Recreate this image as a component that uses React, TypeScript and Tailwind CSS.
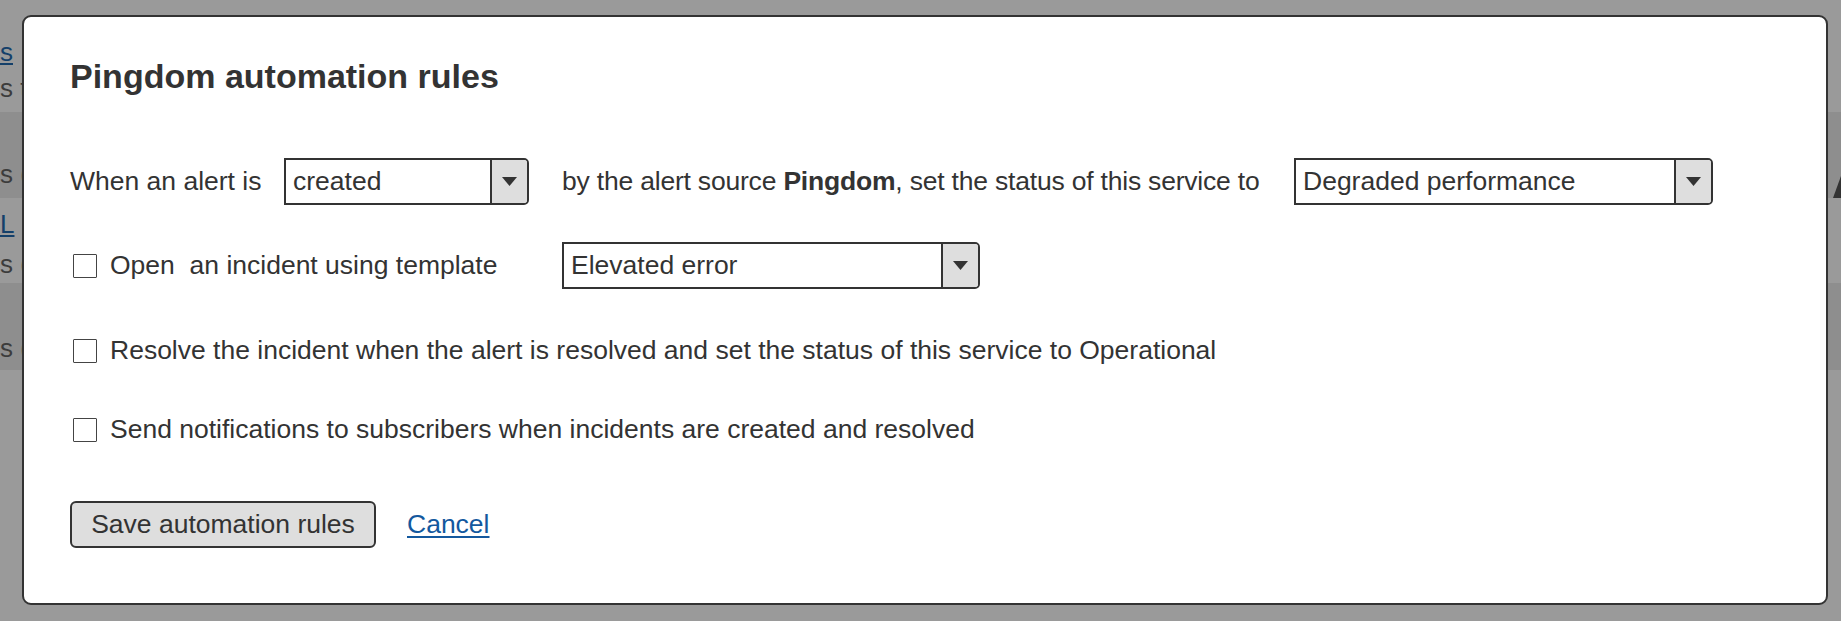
import React from "react";

const FONT = { fontFamily: '"Liberation Sans", Arial, sans-serif' };

function Select({ value, width }: { value: string; width: string }) {
  return (
    <div className={`flex h-[47px] ${width} border-2 border-[#333] rounded-r-[5px] bg-white`}>
      <div className="flex-1 flex items-center pl-[7px] text-[26.5px] text-[#333] leading-none whitespace-nowrap overflow-hidden">{value}</div>
      <div className="w-[37px] flex items-center justify-center bg-[#dedede] border-l-2 border-[#333] rounded-r-[3px]">
        <svg width="17" height="11" viewBox="0 0 17 11">
          <polygon points="1,1 16,1 8.5,10" fill="#333" />
        </svg>
      </div>
    </div>
  );
}

function Checkbox() {
  return <div className="w-[24px] h-[24px] border-[1.5px] border-[#444] rounded-[1px] bg-white shrink-0" />;
}

export default function App() {
  return (
    <div className="relative w-[1841px] h-[621px] bg-[#9a9a9a] overflow-hidden" style={FONT}>
      {/* background page behind overlay */}
      <div className="flex flex-col w-full">
        <div className="h-[112px] bg-[#9a9a9a] relative">
          <div className="pt-[38px] text-[26px] leading-[28px] text-[#14406a] underline">s</div>
          <div className="mt-[8px] text-[26px] leading-[28px] text-[#3c3c3c] whitespace-pre">s t</div>
        </div>
        <div className="h-[86px] bg-[#8e8e8e] flex flex-col justify-end pb-[10px]">
          <div className="text-[26px] leading-[28px] text-[#3c3c3c] whitespace-pre">s (</div>
        </div>
        <div className="h-[85px] bg-[#9a9a9a] flex flex-col pt-[12px]">
          <div className="text-[26px] leading-[28px] text-[#14406a] underline">L</div>
          <div className="text-[26px] leading-[28px] text-[#3c3c3c] mt-[12px] whitespace-pre">s (</div>
        </div>
        <div className="h-[87px] bg-[#8e8e8e] flex flex-col justify-end pb-[8px]">
          <div className="text-[26px] leading-[28px] text-[#3c3c3c] whitespace-pre">s (</div>
        </div>
        <div className="flex-1 bg-[#9a9a9a]" />
      </div>
      <div className="absolute right-0 top-[176px]">
        <svg width="8" height="24" viewBox="0 0 8 24">
          <polygon points="8,0 8,22 0,22" fill="#333" />
        </svg>
      </div>

      {/* dialog */}
      <div className="absolute left-[22px] top-[15px] w-[1806px] h-[590px] bg-white border-2 border-[#333] rounded-[9px] pl-[46px] pt-[39px] text-[#333]">
        <h1 className="text-[34px] leading-[40px] font-bold">Pingdom automation rules</h1>

        <div className="mt-[62px] flex items-center h-[47px] text-[26.5px]">
          <div className="w-[214px] whitespace-nowrap">When an alert is</div>
          <Select value="created" width="w-[245px]" />
          <div className="w-[765px] pl-[33px] whitespace-nowrap tracking-[-0.2px]">
            by the alert source <span className="font-bold">Pingdom</span>, set the status of this service to
          </div>
          <Select value="Degraded performance" width="w-[419px]" />
        </div>

        <div className="mt-[37px] flex items-center h-[47px] text-[26.5px]">
          <div className="w-[492px] flex items-center pl-[3px]">
            <Checkbox />
            <span className="ml-[13px] whitespace-pre">Open  an incident using template</span>
          </div>
          <Select value="Elevated error" width="w-[418px]" />
        </div>

        <div className="mt-[38px] flex items-center h-[47px] text-[26.5px] pl-[3px]">
          <Checkbox />
          <span className="ml-[13px] whitespace-nowrap">Resolve the incident when the alert is resolved and set the status of this service to Operational</span>
        </div>

        <div className="mt-[32px] flex items-center h-[47px] text-[26.5px] pl-[3px]">
          <Checkbox />
          <span className="ml-[13px] whitespace-nowrap">Send notifications to subscribers when incidents are created and resolved</span>
        </div>

        <div className="mt-[48px] flex items-center h-[47px]">
          <button className="h-[47px] w-[306px] bg-[#dedede] border-2 border-[#333] rounded-[6px] text-[26.5px] text-[#333] flex items-center justify-center">
            Save automation rules
          </button>
          <a href="#" className="ml-[31px] text-[26.5px] text-[#13589e] underline underline-offset-[3px]">Cancel</a>
        </div>
      </div>
    </div>
  );
}
